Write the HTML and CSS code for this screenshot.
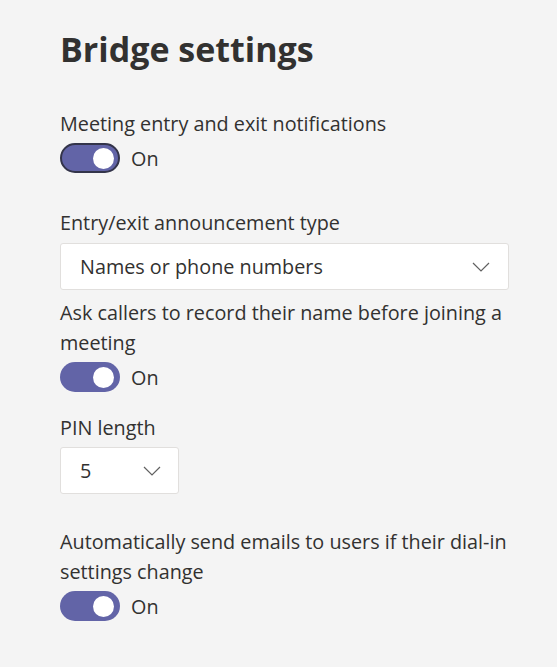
FILE: index.html
```html
<!DOCTYPE html>
<html>
<head>
<meta charset="utf-8">
<link rel="stylesheet" href="styles.css">
</head>
<body>
<main class="panel">
  <h1 class="title">Bridge settings</h1>

  <section class="field field-first">
    <div class="label">Meeting entry and exit notifications</div>
    <div class="toggle-row">
      <span class="toggle toggle-focus"><span class="knob"></span></span>
      <span class="toggle-text">On</span>
    </div>
  </section>

  <section class="field field-gap-lg">
    <div class="label">Entry/exit announcement type</div>
    <div class="select select-wide">
      <span class="select-text">Names or phone numbers</span>
      <svg class="chev" width="18" height="10" viewBox="0 0 18 10"><path d="M1 1 L9 9 L17 1" fill="none" stroke="#616161" stroke-width="1.2"/></svg>
    </div>
  </section>

  <section class="field field-gap-sm">
    <div class="label">Ask callers to record their name before joining a meeting</div>
    <div class="toggle-row">
      <span class="toggle"><span class="knob"></span></span>
      <span class="toggle-text">On</span>
    </div>
  </section>

  <section class="field field-gap-md">
    <div class="label">PIN length</div>
    <div class="select select-narrow">
      <span class="select-text">5</span>
      <svg class="chev" width="18" height="10" viewBox="0 0 18 10"><path d="M1 1 L9 9 L17 1" fill="none" stroke="#616161" stroke-width="1.2"/></svg>
    </div>
  </section>

  <section class="field field-gap-lg2">
    <div class="label">Automatically send emails to users if their dial-in settings change</div>
    <div class="toggle-row">
      <span class="toggle"><span class="knob"></span></span>
      <span class="toggle-text">On</span>
    </div>
  </section>
</main>
</body>
</html>
```

FILE: styles.css
```css
html, body {
  margin: 0;
  padding: 0;
  background: #f4f4f4;
}
body {
  font-family: "Open Sans", "Noto Sans", sans-serif;
  color: #323130;
  width: 557px;
  height: 667px;
  overflow: hidden;
}
.panel {
  padding: 24px 0 0 60px;
  width: 448px;
}
.title {
  margin: 0;
  font-size: 34px;
  font-weight: 700;
  line-height: 50px;
  color: #323130;
}
.field { display: flex; flex-direction: column; }
.field-first { margin-top: 35px; }
.field-gap-lg { margin-top: 35px; }
.field-gap-sm { margin-top: 8px; }
.field-gap-md { margin-top: 21px; }
.field-gap-lg2 { margin-top: 33px; }
.label {
  font-size: 19.8px;
  line-height: 30px;
}
.toggle-row {
  display: flex;
  align-items: center;
  margin-top: 4px;
  height: 30px;
}
.toggle {
  box-sizing: border-box;
  width: 60px;
  height: 30px;
  border-radius: 15px;
  background: #6264a7;
  display: flex;
  align-items: center;
  justify-content: flex-end;
  padding-right: 6px;
}
.toggle-focus {
  border: 2px solid #33344a;
  padding-right: 4px;
}
.knob {
  width: 21px;
  height: 21px;
  border-radius: 50%;
  background: #ffffff;
}
.toggle-text {
  margin-left: 11px;
  font-size: 19.8px;
}
.select {
  box-sizing: border-box;
  margin-top: 5px;
  height: 47px;
  background: #ffffff;
  border: 1px solid #e1dfdd;
  border-radius: 3px;
  display: flex;
  align-items: center;
  justify-content: space-between;
  padding: 0 18px 0 19px;
  font-size: 19.8px;
}
.select-wide { width: 449px; }
.select-narrow { width: 119px; margin-top: 4px; padding-right: 17px; }
.chev { display: block; }
```
